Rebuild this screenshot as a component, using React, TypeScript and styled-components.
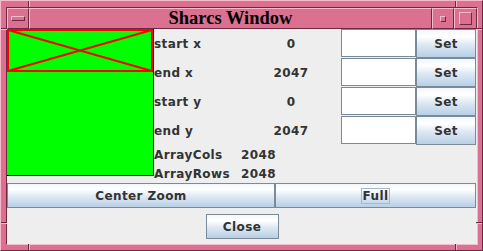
import React from 'react'
import styled, { createGlobalStyle } from 'styled-components'

const PINK = '#db7090'
const LIGHT = '#f5bccc'
const DARK = '#6c2a42'

const GlobalStyle = createGlobalStyle`
  body {
    margin: 0;
    background: #eeeeee;
  }
`

const rows = [
  { label: 'start x', value: '0' },
  { label: 'end x', value: '2047' },
  { label: 'start y', value: '0' },
  { label: 'end y', value: '2047' },
]

const App: React.FC = () => {
  return (
    <>
      <GlobalStyle />
      <Window>
        <Notch style={{ left: 27, top: 0 }} $vertical />
        <Notch style={{ left: 454, top: 0 }} $vertical />
        <Notch style={{ left: 27, bottom: 0 }} $vertical />
        <Notch style={{ left: 454, bottom: 0 }} $vertical />
        <Notch style={{ left: 0, top: 27 }} />
        <Notch style={{ right: 0, top: 27 }} />
        <Notch style={{ left: 0, top: 221 }} />
        <Notch style={{ right: 0, top: 221 }} />
        <Frame>
          <TitleBar>
            <TitleButton $width={22}>
              <Glyph $w={14} $h={5} />
            </TitleButton>
            <Title>Sharcs Window</Title>
            <TitleButton $width={22}>
              <Glyph $w={6} $h={6} />
            </TitleButton>
            <TitleButton $width={23}>
              <Glyph $w={13} $h={13} />
            </TitleButton>
          </TitleBar>
          <Content>
            <Top>
              <Preview>
                <svg width="146" height="146" viewBox="0 0 146 146">
                  <rect x="1" y="1" width="144" height="41" fill="none" stroke="#ff0000" strokeWidth="2" />
                  <line x1="1" y1="1" x2="145" y2="42" stroke="#ff0000" strokeWidth="2" />
                  <line x1="145" y1="1" x2="1" y2="42" stroke="#ff0000" strokeWidth="2" />
                </svg>
              </Preview>
              <Grid>
                {rows.map((r) => (
                  <React.Fragment key={r.label}>
                    <Label>{r.label}</Label>
                    <Value $center>{r.value}</Value>
                    <Field />
                    <Button $height={29}>Set</Button>
                  </React.Fragment>
                ))}
                <Label>ArrayCols</Label>
                <Value>2048</Value>
                <Label />
                <Label />
                <Label>ArrayRows</Label>
                <Value>2048</Value>
              </Grid>
            </Top>
            <ButtonRow>
              <Button $width={268}>Center Zoom</Button>
              <Button $width={201}>
                <Focus>Full</Focus>
              </Button>
            </ButtonRow>
            <CloseButton $width={73}>Close</CloseButton>
          </Content>
        </Frame>
      </Window>
    </>
  )
}

export default App

const Window = styled.div`
  position: relative;
  box-sizing: border-box;
  width: 483px;
  height: 251px;
  background: ${PINK};
  border: 1px solid;
  border-color: ${LIGHT} ${DARK} ${DARK} ${LIGHT};
  padding: 6px 4px 5px 5px;
  display: flex;
`
const Notch = styled.div<{ $vertical?: boolean }>`
  position: absolute;
  box-sizing: border-box;
  width: ${({ $vertical }) => ($vertical ? '2px' : '6px')};
  height: ${({ $vertical }) => ($vertical ? '6px' : '2px')};
  border-left: ${({ $vertical }) => ($vertical ? `1px solid ${DARK}` : 'none')};
  border-top: ${({ $vertical }) => ($vertical ? 'none' : `1px solid ${DARK}`)};
  background: ${LIGHT};
`
const Frame = styled.div`
  flex: 1;
  display: flex;
  flex-direction: column;
  border: 1px solid;
  border-color: ${DARK} ${LIGHT} ${LIGHT} ${DARK};
`
const TitleBar = styled.div`
  display: flex;
  height: 21px;
`
const TitleButton = styled.div<{ $width: number }>`
  box-sizing: border-box;
  width: ${({ $width }) => $width}px;
  display: flex;
  align-items: center;
  justify-content: center;
  border: 1px solid;
  border-color: ${LIGHT} ${DARK} ${DARK} ${LIGHT};
`
const Glyph = styled.div<{ $w: number; $h: number }>`
  box-sizing: border-box;
  width: ${({ $w }) => $w}px;
  height: ${({ $h }) => $h}px;
  border: 1px solid;
  border-color: ${LIGHT} ${DARK} ${DARK} ${LIGHT};
`
const Title = styled(TitleButton).attrs({ $width: 0 })`
  flex: 1;
  font-family: 'Liberation Serif', 'DejaVu Serif', serif;
  font-weight: bold;
  font-size: 18.5px;
  color: #000;
`
const Content = styled.div`
  flex: 1;
  background: #eeeeee;
  display: flex;
  flex-direction: column;
  font-family: 'DejaVu Sans', 'Liberation Sans', sans-serif;
  font-weight: bold;
  font-size: 12px;
  letter-spacing: 0.4px;
  color: #333333;
`
const Top = styled.div`
  display: flex;
  height: 154px;
`
const Preview = styled.div`
  width: 146px;
  height: 146px;
  background: #00ff00;
  border-right: 1px solid #000;
  border-bottom: 1px solid #000;
  svg {
    display: block;
  }
`
const Grid = styled.div`
  display: grid;
  grid-template-columns: 87px 100px 75px 60px;
  grid-template-rows: repeat(4, 29px) repeat(2, 19px);
  align-items: center;
`
const Label = styled.div`
  white-space: nowrap;
`
const Value = styled.div<{ $center?: boolean }>`
  text-align: ${({ $center }) => ($center ? 'center' : 'left')};
`
const Field = styled.div`
  box-sizing: border-box;
  align-self: start;
  height: 28px;
  background: #ffffff;
  border: 1px solid #7a8a99;
`
const Button = styled.div<{ $width?: number; $height?: number }>`
  box-sizing: border-box;
  width: ${({ $width }) => ($width ? `${$width}px` : 'auto')};
  height: ${({ $height }) => $height || 25}px;
  display: flex;
  align-items: center;
  justify-content: center;
  border: 1px solid #7a8a99;
  background: linear-gradient(#f2f7fc 0%, #ffffff 25%, #dde8f3 55%, #b8cfe5 100%);
  color: #333333;
`
const ButtonRow = styled.div`
  display: flex;
  height: 25px;
`
const CloseButton = styled(Button)`
  align-self: center;
  margin-top: 6px;
`
const Focus = styled.span`
  border: 1px solid #a3b8cc;
  padding: 0 1px;
  line-height: 14px;
`
